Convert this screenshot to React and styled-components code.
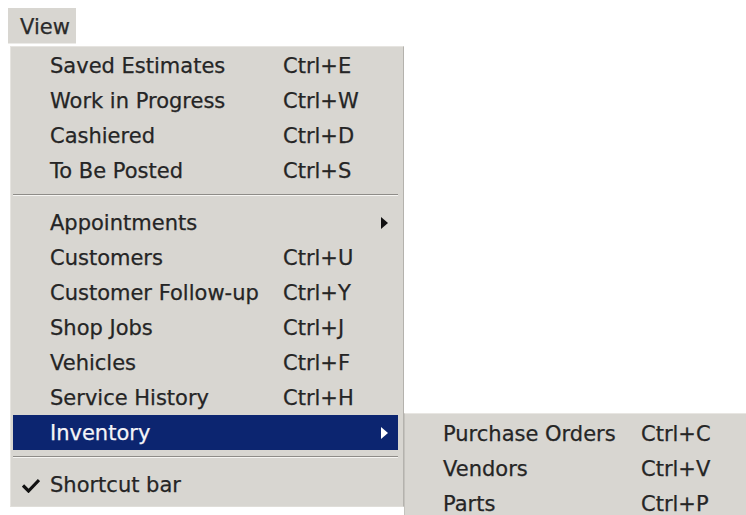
import React from 'react';
import styled, { createGlobalStyle } from 'styled-components';

const GlobalStyle = createGlobalStyle`
  html, body {
    margin: 0;
    padding: 0;
    background: #ffffff;
    overflow: hidden;
  }
  body {
    font-family: "DejaVu Sans", Verdana, sans-serif;
    font-size: 21px;
    color: #222;
    -webkit-text-stroke: 0.25px currentColor;
  }
`;

const Page = styled.div`
  width: 746px;
  height: 515px;
  padding: 8px 0 0 8px;
  box-sizing: border-box;
`;

const BarItem = styled.div`
  width: 68px;
  height: 36px;
  box-sizing: border-box;
  padding: 3px 0 0 12px;
  display: flex;
  align-items: center;
  background: #d8d6d1;
  border-bottom: 1px solid #ecebe8;
  color: #2a2a2a;
`;

const Menu = styled.div`
  position: relative;
  margin: 2px 0 0 2px;
  width: 394px;
  box-sizing: border-box;
  padding: 1px 5px 4px 2px;
  background: #d8d6d1;
  border-top: 1px solid #e6e4e0;
  border-left: 1px solid #e6e4e0;
  border-right: 1px solid #b4b2ad;
  border-bottom: 1px solid #e0ded9;
`;

const SubMenu = styled.div`
  position: absolute;
  left: calc(100% + 6px);
  top: -2px;
  width: 360px;
  padding: 2px 0 12px 0;
  background: #d8d6d1;
  border-top: 1px solid #e8e6e2;
  border-left: 1px solid #c4c2bd;
`;

const Row = styled.div`
  position: relative;
  height: 35px;
  display: flex;
  align-items: center;
  padding-left: ${p => p.$indent || 37}px;
  background: ${p => (p.$active ? '#0c2570' : 'transparent')};
  color: ${p => (p.$active ? '#f4f4f8' : '#252525')};
  white-space: nowrap;
`;

const Label = styled.span`
  width: ${p => p.$width || 233}px;
  flex-shrink: 0;
`;

const Shortcut = styled.span`
  flex-shrink: 0;
`;

const Arrow = styled.span`
  position: absolute;
  right: 10px;
  top: 50%;
  margin-top: -6px;
  width: 0;
  height: 0;
  border-top: 6px solid transparent;
  border-bottom: 6px solid transparent;
  border-left: 7px solid ${p => (p.$light ? '#ffffff' : '#111111')};
`;

const Check = styled.svg`
  position: absolute;
  left: 9px;
  top: 11px;
`;

const Separator = styled.div`
  height: 17px;
  box-sizing: border-box;
  padding-top: 6px;

  &::before {
    content: '';
    display: block;
    height: 1px;
    background: #8e8c88;
    border-bottom: 1px solid #f6f5f2;
  }
`;

const topItems = [
  ['Saved Estimates', 'Ctrl+E'],
  ['Work in Progress', 'Ctrl+W'],
  ['Cashiered', 'Ctrl+D'],
  ['To Be Posted', 'Ctrl+S'],
];

const middleItems = [
  ['Appointments', null, true],
  ['Customers', 'Ctrl+U'],
  ['Customer Follow-up', 'Ctrl+Y'],
  ['Shop Jobs', 'Ctrl+J'],
  ['Vehicles', 'Ctrl+F'],
  ['Service History', 'Ctrl+H'],
];

const inventoryItems = [
  ['Purchase Orders', 'Ctrl+C'],
  ['Vendors', 'Ctrl+V'],
  ['Parts', 'Ctrl+P'],
];

const Item = ({ label, shortcut, submenu }) => (
  <Row>
    <Label>{label}</Label>
    {shortcut && <Shortcut>{shortcut}</Shortcut>}
    {submenu && <Arrow />}
  </Row>
);

export default function App() {
  return (
    <>
      <GlobalStyle />
      <Page>
        <BarItem>View</BarItem>
        <Menu>
          {topItems.map(([l, s]) => (
            <Item key={l} label={l} shortcut={s} />
          ))}
          <Separator />
          {middleItems.map(([l, s, sub]) => (
            <Item key={l} label={l} shortcut={s} submenu={sub} />
          ))}
          <Row $active>
            <Label>Inventory</Label>
            <Arrow $light />
            <SubMenu>
              {inventoryItems.map(([l, s]) => (
                <Row key={l} $indent={38}>
                  <Label $width={198}>{l}</Label>
                  <Shortcut>{s}</Shortcut>
                </Row>
              ))}
            </SubMenu>
          </Row>
          <Separator />
          <Row>
            <Check width="18" height="15" viewBox="0 0 18 15">
              <path d="M1 7.5 L6.5 13 L17 2" fill="none" stroke="#111" strokeWidth="3.2" strokeLinejoin="miter" />
            </Check>
            <Label>Shortcut bar</Label>
          </Row>
        </Menu>
      </Page>
    </>
  );
}
